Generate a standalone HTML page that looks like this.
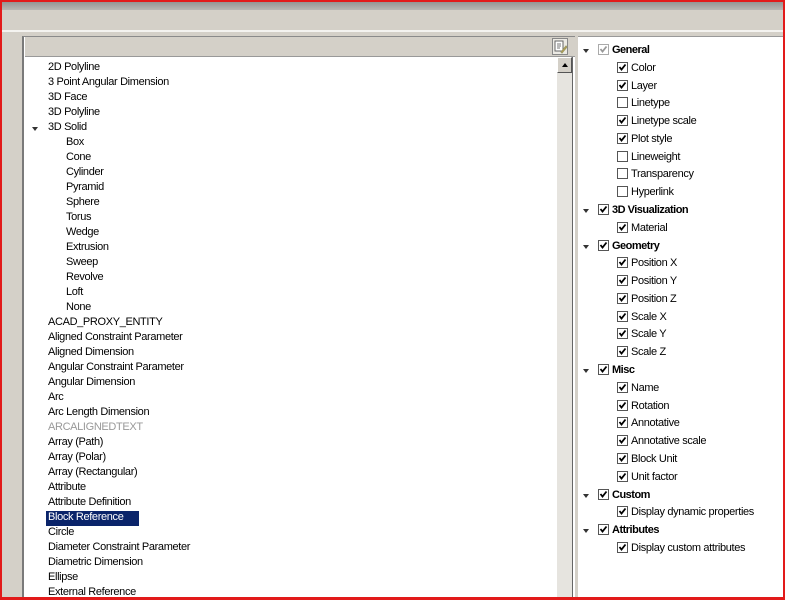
<!DOCTYPE html>
<html><head><style>
*{margin:0;padding:0;box-sizing:border-box}
body{width:785px;height:600px;position:relative;overflow:hidden;background:#d4d0c8;font-family:"Liberation Sans",Arial,sans-serif;font-size:11px;color:#000}
.abs{position:absolute}
.t{position:absolute;white-space:nowrap;line-height:13px;letter-spacing:-0.35px}
.cb{position:absolute;width:11px;height:11px;border:1px solid #555;background:#fff}
.cb svg{position:absolute;left:0;top:0}
.arr{position:absolute;width:0;height:0;border-left:3px solid transparent;border-right:3px solid transparent;border-top:4px solid #333}
</style></head><body>
<div class="abs" style="left:0;top:0;width:785px;height:10px;background:linear-gradient(#8c8c8c,#b8b6b2)"></div>
<div class="abs" style="left:0;top:30px;width:785px;height:2px;background:#f4f3f0"></div>
<div class="abs" style="left:22px;top:36px;width:553px;height:564px;border-left:2px solid #7a7a7a;border-top:1px solid #8a8a8a;background:#fff"></div>
<div class="abs" style="left:25px;top:37px;width:550px;height:20px;background:#d4d0c8;border-bottom:1px solid #999"></div>
<div class="abs" style="left:552px;top:38px;width:16px;height:17px;border:1px solid #888;background:#eceae4"></div>
<svg class="abs" style="left:554px;top:40px" width="13" height="14"><rect x="1" y="1" width="8" height="10" fill="#fff" stroke="#666"/><path d="M3 4h4M3 6h4M3 8h3" stroke="#777"/><path d="M7 12l5-6 1 1-5 6z" fill="#e0a030" stroke="#996"/></svg>
<div class="abs" style="left:557px;top:57px;width:16px;height:543px;background:#e6e4df;border-right:1px solid #666"></div>
<div class="abs" style="left:557px;top:57px;width:15px;height:16px;background:#d4d0c8;border:1px solid;border-color:#fff #555 #555 #fff"></div>
<div class="abs" style="left:562px;top:63px;width:0;height:0;border-left:3px solid transparent;border-right:3px solid transparent;border-bottom:4px solid #000"></div>
<div class="abs" style="left:578px;top:36px;width:207px;height:564px;background:#fff;border-top:1px solid #999"></div>
<div class="abs" style="left:46px;top:511px;width:93px;height:15px;background:#0a246a"></div>
<div class="arr" style="left:32px;top:127px"></div>
<div id="L"></div><div id="R"></div>
<div class="abs" style="left:0;top:0;width:785px;height:600px;border:2px solid #e21a1a;border-bottom-width:3px"></div>
<script>
var L=["2D Polyline","3 Point Angular Dimension","3D Face","3D Polyline","3D Solid","*Box","*Cone","*Cylinder","*Pyramid","*Sphere","*Torus","*Wedge","*Extrusion","*Sweep","*Revolve","*Loft","*None","ACAD_PROXY_ENTITY","Aligned Constraint Parameter","Aligned Dimension","Angular Constraint Parameter","Angular Dimension","Arc","Arc Length Dimension","ARCALIGNEDTEXT","Array (Path)","Array (Polar)","Array (Rectangular)","Attribute","Attribute Definition","Block Reference","Circle","Diameter Constraint Parameter","Diametric Dimension","Ellipse","External Reference"];
var h="";L.forEach(function(s,i){var sub=s[0]=="*";if(sub)s=s.slice(1);var c=s=="ARCALIGNEDTEXT"?"#999":(s=="Block Reference"?"#fff":"#000");h+='<div class="t" style="left:'+(sub?66:48)+'px;top:'+(61+i*15)+'px;color:'+c+'">'+s+'</div>';});
document.getElementById("L").outerHTML=h;
var R=[["General",1,1],["Color",0,1],["Layer",0,1],["Linetype",0,0],["Linetype scale",0,1],["Plot style",0,1],["Lineweight",0,0],["Transparency",0,0],["Hyperlink",0,0],["3D Visualization",1,1],["Material",0,1],["Geometry",1,1],["Position X",0,1],["Position Y",0,1],["Position Z",0,1],["Scale X",0,1],["Scale Y",0,1],["Scale Z",0,1],["Misc",1,1],["Name",0,1],["Rotation",0,1],["Annotative",0,1],["Annotative scale",0,1],["Block Unit",0,1],["Unit factor",0,1],["Custom",1,1],["Display dynamic properties",0,1],["Attributes",1,1],["Display custom attributes",0,1]];
h="";R.forEach(function(r,i){var y=50+i*17.78,g=r[1],x=g?598:617;var col=(i==0)?"#999":"#000";
if(g)h+='<div class="arr" style="left:583px;top:'+(y-1)+'px"></div>';
h+='<div class="cb" style="left:'+x+'px;top:'+(y-6)+'px;border-color:'+(i==0?"#aaa":"#555")+'">'+(r[2]?'<svg width="9" height="9"><path d="M1.5 4l2 2.5 4-5" stroke="'+col+'" stroke-width="1.8" fill="none"/></svg>':'')+'</div>';
h+='<div class="t" style="left:'+(x+14)+'px;top:'+(y-6)+'px;'+(g?'font-weight:bold;letter-spacing:-0.5px':'')+'">'+r[0]+'</div>';});
document.getElementById("R").outerHTML=h;
</script>
</body></html>
